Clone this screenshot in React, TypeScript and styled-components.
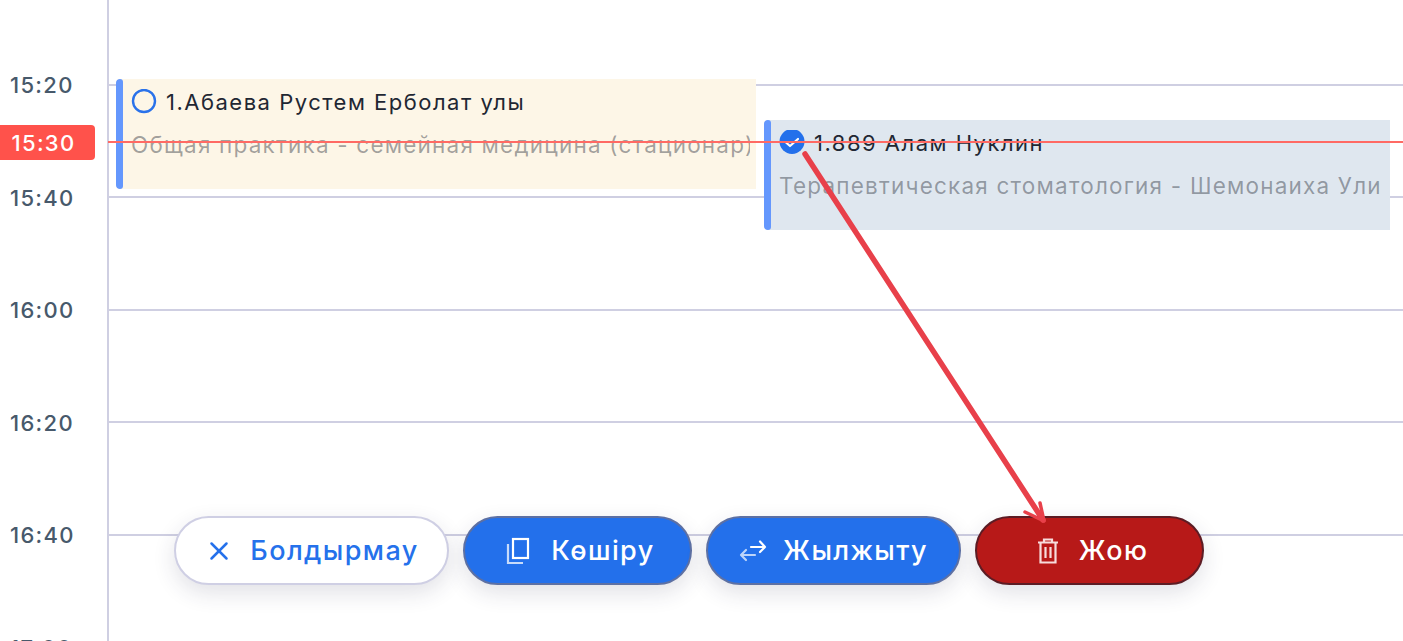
import React from "react";
import styled, { createGlobalStyle } from "styled-components";
import { X } from "lucide-react";

const GlobalStyle = createGlobalStyle`
  html, body {
    margin: 0;
    padding: 0;
    background: #fff;
  }
  body {
    font-family: Inter, "Noto Sans", sans-serif;
    overflow: hidden;
  }
`;

const ROW_HEIGHT = 112.5;

const Page = styled.div`
  position: relative;
  display: flex;
  width: 1403px;
  height: 641px;
  overflow: hidden;
`;

const Gutter = styled.div`
  width: 107px;
  flex: none;
  padding-top: 72px;
  border-right: 2px solid #cfcfe2;
`;

const TimeLabel = styled.div`
  height: ${ROW_HEIGHT}px;
  padding-left: 10px;
  box-sizing: border-box;
  font-size: 22px;
  line-height: 26px;
  font-weight: 500;
  letter-spacing: 1.3px;
  color: #47596b;
`;

const Lanes = styled.div`
  position: relative;
  flex: 1;
  padding-top: 83.5px;
`;

const Line = styled.div`
  height: ${ROW_HEIGHT}px;
  box-sizing: border-box;
  border-top: 2px solid #cfcfe2;
`;

const Event = styled.div<{ $left: number; $top: number; $width: number; $bg: string }>`
  position: absolute;
  left: ${(p) => p.$left}px;
  top: ${(p) => p.$top}px;
  width: ${(p) => p.$width}px;
  height: 110px;
  background: ${(p) => p.$bg};
  overflow: hidden;
  padding: 8px 6px 0 15px;
  box-sizing: border-box;
  border-radius: 4px 0 0 4px;
`;

const Accent = styled.div`
  position: absolute;
  left: 0;
  top: 0;
  bottom: 0;
  width: 7px;
  border-radius: 3px;
  background: #6497fd;
`;

const EventHead = styled.div`
  display: flex;
  align-items: center;
  gap: 9px;
  height: 30px;
`;

const EventName = styled.span`
  font-size: 22px;
  line-height: 30px;
  letter-spacing: 1.5px;
  color: #1f2733;
`;

const EventSub = styled.div`
  margin-top: 13px;
  font-size: 22.5px;
  line-height: 30px;
  letter-spacing: 1.2px;
  white-space: nowrap;
  overflow: hidden;
  color: rgba(31, 39, 51, 0.42);
`;

const NowPill = styled.div`
  position: absolute;
  left: 0;
  top: 125px;
  width: 95px;
  height: 35px;
  display: flex;
  align-items: center;
  justify-content: center;
  padding-right: 8px;
  box-sizing: border-box;
  border-radius: 0 4px 4px 0;
  background: #ff524b;
  color: #fff;
  font-size: 22px;
  font-weight: 500;
  letter-spacing: 1.3px;
`;

const NowLine = styled.div`
  position: absolute;
  left: 108px;
  right: 0;
  top: 141px;
  height: 2px;
  background: #ff6a64;
`;

const ActionBar = styled.div`
  position: absolute;
  left: 174px;
  top: 516px;
  display: flex;
  gap: 14px;
`;

const variants = {
  ghost: { bg: "#fff", border: "#cfcfe4", color: "#2571eb" },
  primary: { bg: "#2370eb", border: "#5d70a3", color: "#fff" },
  danger: { bg: "#b71918", border: "#5c1c24", color: "#fff" },
};

const ActionButton = styled.button<{
  $kind: keyof typeof variants;
  $width: number;
  $gap?: number;
  $inset?: number;
}>`
  width: ${(p) => p.$width}px;
  height: 69px;
  display: flex;
  align-items: center;
  justify-content: center;
  gap: ${(p) => p.$gap ?? 16}px;
  padding: 0 0 0 ${(p) => p.$inset ?? 0}px;
  box-sizing: border-box;
  border-radius: 35px;
  border: 2px solid ${(p) => variants[p.$kind].border};
  background: ${(p) => variants[p.$kind].bg};
  color: ${(p) => variants[p.$kind].color};
  box-shadow: 0 8px 22px rgba(40, 40, 80, 0.14);
  font-family: inherit;
  font-size: 27px;
  font-weight: 500;
  letter-spacing: 1.4px;
`;

const Annotation = styled.svg`
  position: absolute;
  inset: 0;
  pointer-events: none;
`;

const times = ["15:20", "15:40", "16:00", "16:20", "16:40", "17:00"];

const App = () => {
  return (
    <>
      <GlobalStyle />
      <Page>
        <Gutter>
          {times.map((t) => (
            <TimeLabel key={t}>{t}</TimeLabel>
          ))}
        </Gutter>
        <Lanes>
          {times.map((t) => (
            <Line key={t} />
          ))}
          <Event $left={7} $top={79} $width={640} $bg="#fdf6e7">
            <Accent />
            <EventHead>
              <svg width="26" height="26" viewBox="0 0 26 26">
                <circle cx="13" cy="12" r="11" fill="none" stroke="#2a72ea" strokeWidth="2.4" />
              </svg>
              <EventName>1.Абаева Рустем Ерболат улы</EventName>
            </EventHead>
            <EventSub>Общая практика - семейная медицина (стационар)</EventSub>
          </Event>
          <Event $left={655} $top={120} $width={626} $bg="#dfe7ef">
            <Accent />
            <EventHead>
              <svg width="26" height="26" viewBox="0 0 26 26">
                <circle cx="13" cy="11.5" r="12.5" fill="#2370eb" />
                <path d="M7 12.5l4 3.5 8-7" fill="none" stroke="#fff" strokeWidth="2.2" strokeLinecap="round" strokeLinejoin="round" />
              </svg>
              <EventName>1.889 Алам Нуклин</EventName>
            </EventHead>
            <EventSub>Терапевтическая стоматология - Шемонаиха Ули</EventSub>
          </Event>
        </Lanes>
        <NowLine />
        <NowPill>15:30</NowPill>
        <ActionBar>
          <ActionButton $kind="ghost" $width={275}>
            <X size={30} strokeWidth={2} />
            Болдырмау
          </ActionButton>
          <ActionButton $kind="primary" $width={229} $gap={20} $inset={5}>
            <svg width="26" height="28" viewBox="0 0 26 28" fill="none" stroke="#fff" strokeWidth="2.2">
              <rect x="8" y="2" width="15" height="19" />
              <path d="M3 7v19h15" opacity="0.75" />
            </svg>
            Көшіру
          </ActionButton>
          <ActionButton $kind="primary" $width={255}>
            <svg width="28" height="24" viewBox="0 0 28 24" fill="none" stroke="#fff" strokeWidth="2.2" strokeLinecap="round" strokeLinejoin="round">
              <path d="M12 8h14M21 2.5l5 5.5-5 5" />
              <path d="M16 16H2M7 11l-5 5 5 5" opacity="0.7" />
            </svg>
            Жылжыту
          </ActionButton>
          <ActionButton $kind="danger" $width={229} $gap={20} $inset={6}>
            <svg width="22" height="26" viewBox="0 0 22 26" fill="none" stroke="#f7dcdc" strokeWidth="2.2">
              <path d="M1 4.5h20M7 4V1.5h8V4" />
              <path d="M3.5 4.5v20h15v-20" />
              <path d="M8.5 9v11M13.5 9v11" />
            </svg>
            Жою
          </ActionButton>
        </ActionBar>
        <Annotation width="1403" height="641" viewBox="0 0 1403 641">
          <g fill="none" stroke="#e8404a" strokeLinecap="round" strokeLinejoin="round">
            <path d="M805 154L1043 520" strokeWidth="5.5" />
            <path d="M1025 512L1044 521L1040 503" strokeWidth="3.5" />
          </g>
        </Annotation>
      </Page>
    </>
  );
};

export default App;
